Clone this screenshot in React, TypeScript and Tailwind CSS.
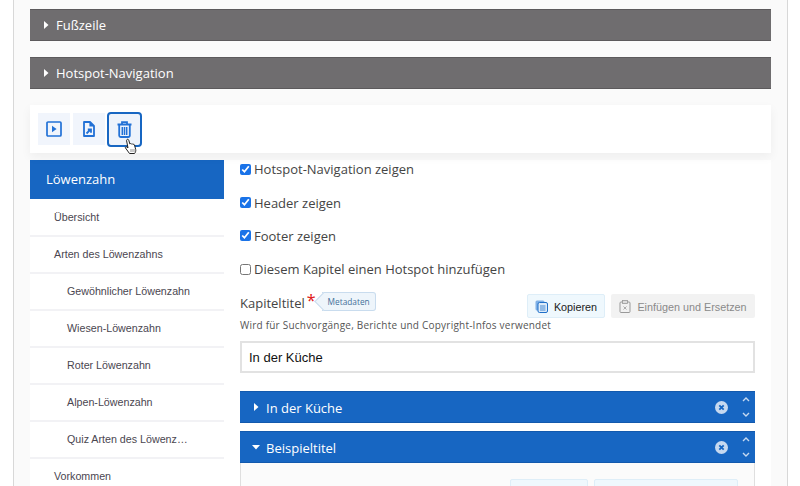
import React from "react";

const openSans = "[font-family:'Open_Sans',sans-serif]";
const arial = "[font-family:'Liberation_Sans',sans-serif]";

const navItems = [
  { label: "Übersicht", depth: 0 },
  { label: "Arten des Löwenzahns", depth: 0 },
  { label: "Gewöhnlicher Löwenzahn", depth: 1 },
  { label: "Wiesen-Löwenzahn", depth: 1 },
  { label: "Roter Löwenzahn", depth: 1 },
  { label: "Alpen-Löwenzahn", depth: 1 },
  { label: "Quiz Arten des Löwenz…", depth: 1 },
  { label: "Vorkommen", depth: 0 },
];

const checks = [
  { label: "Hotspot-Navigation zeigen", checked: true },
  { label: "Header zeigen", checked: true },
  { label: "Footer zeigen", checked: true },
  { label: "Diesem Kapitel einen Hotspot hinzufügen", checked: false },
];

const Caret = ({ open = false }: { open?: boolean }) => (
  <svg width="8" height="8" viewBox="0 0 8 8" className="shrink-0">
    {open ? (
      <path d="M0 2h8L4 6.5z" fill="#fff" />
    ) : (
      <path d="M2 0l4.5 4L2 8z" fill="#fff" />
    )}
  </svg>
);

const GrayBar = ({ title }: { title: string }) => (
  <div className="h-8 bg-[#6f6d6f] border-y border-[#5c5a5c] flex items-center pl-3">
    <Caret />
    <span className={`ml-[6px] pt-[2px] text-[13px] text-white ${openSans}`}>{title}</span>
  </div>
);

const BlueBar = ({ title, open }: { title: string; open?: boolean }) => (
  <div className="h-8 bg-[#1766c2] border-y border-[#1259ad] flex items-center pl-3 pr-[5px]">
    <span className="w-[14px]">
      <Caret open={open} />
    </span>
    <span className={`pt-[3px] text-[13px] text-white ${openSans}`}>{title}</span>
    <div className="ml-auto flex items-center gap-[14px]">
      <svg width="13" height="13" viewBox="0 0 13 13">
        <circle cx="6.5" cy="6.5" r="6.5" fill="#c6d9f0" />
        <path d="M4.3 4.3l4.4 4.4M8.7 4.3l-4.4 4.4" stroke="#1766c2" strokeWidth="1.8" />
      </svg>
      <div className="flex flex-col gap-[10px]">
        <svg width="8" height="5" viewBox="0 0 8 5">
          <path d="M1 4l3-3 3 3" fill="none" stroke="#c6d9f0" strokeWidth="1.4" />
        </svg>
        <svg width="8" height="5" viewBox="0 0 8 5">
          <path d="M1 1l3 3 3-3" fill="none" stroke="#c6d9f0" strokeWidth="1.4" />
        </svg>
      </div>
    </div>
  </div>
);

const ToolButton = ({
  children,
  active,
}: {
  children: React.ReactNode;
  active?: boolean;
}) => (
  <div
    className={`flex items-center justify-center ${
      active
        ? "size-[35px] -ml-[1px] mt-px rounded-[4px] border-2 border-[#1766c2] bg-[#eef3fb]"
        : "size-8 bg-[#f1f5fc]"
    }`}
  >
    {children}
  </div>
);

export default function App() {
  return (
    <div className="w-[800px] h-[486px] overflow-hidden bg-white">
      <div className="relative ml-[13px] w-[775px] h-[486px] border-x border-[#d8d8d8] bg-[#fafafa] pl-4 pr-4 pt-[9px]">
        <div className="flex flex-col gap-4">
          <GrayBar title="Fußzeile" />
          <GrayBar title="Hotspot-Navigation" />
        </div>

        {/* toolbar */}
        <div className="relative z-10 mt-4 h-[48px] bg-white shadow-[0_4px_10px_rgba(0,0,0,0.05)] flex items-center pl-2 gap-[3px]">
          <ToolButton>
            <svg width="16" height="16" viewBox="0 0 16 16">
              <rect x="1" y="1" width="14" height="14" rx="1" fill="none" stroke="#2271d6" strokeWidth="1.7" />
              <path d="M6 4.8l4.6 3.2L6 11.2z" fill="#2271d6" />
            </svg>
          </ToolButton>
          <ToolButton>
            <svg width="14" height="16" viewBox="0 0 14 16">
              <path d="M2 1h6l4 4v10H2z" fill="none" stroke="#2271d6" strokeWidth="1.8" strokeLinejoin="round" />
              <path d="M8 1v4h4" fill="#2271d6" stroke="#2271d6" strokeWidth="1.2" />
              <path d="M4.5 12.5L8 9M5.8 8.5H9v3.2" fill="none" stroke="#2271d6" strokeWidth="1.8" />
            </svg>
          </ToolButton>
          <ToolButton active>
            <svg width="15" height="17" viewBox="0 0 15 17">
              <path d="M0.5 3.5h14M5 3.5V1.2h5v2.3" fill="none" stroke="#2271d6" strokeWidth="1.8" />
              <path d="M2.2 4v10.5a1.5 1.5 0 0 0 1.5 1.5h7.6a1.5 1.5 0 0 0 1.5-1.5V4" fill="none" stroke="#2271d6" strokeWidth="1.8" />
              <path d="M5.3 6v8M7.5 6v8M9.7 6v8" stroke="#2271d6" strokeWidth="1.5" />
            </svg>
          </ToolButton>
          {/* pointer */}
          <svg width="16" height="18" viewBox="0 0 16 18" className="absolute left-[93px] top-[33px]">
            <path
              d="M4 1.5c.8-.6 1.6 0 1.8.8l1 3.6c.5-.5 1.3-.4 1.6.2.5-.4 1.3-.3 1.6.3.6-.3 1.3 0 1.5.6l1.2 4.5c.3 1.4-.2 3-1.2 4H6.5L2.5 10c-.5-.7.3-1.6 1.1-1.1l1.4 1L3.6 2.8c-.1-.5 0-1 .4-1.3z"
              fill="#fff"
              stroke="#222"
              strokeWidth="1"
              strokeLinejoin="round"
            />
            <path d="M8 11v3M10 11v3M12 11v3" stroke="#777" strokeWidth="0.8" />
          </svg>
        </div>

        <div className="mt-[7px] flex h-[340px] overflow-hidden">
          {/* sidebar */}
          <div className={`w-[194px] shrink-0 ${arial}`}>
            <div className={`h-[39px] bg-[#1766c2] flex items-center pl-4 pt-px text-[13px] text-white ${openSans}`}>
              Löwenzahn
            </div>
            <div className="pt-px bg-white">
              {navItems.map((item) => (
                <div
                  key={item.label}
                  className={`h-[37px] bg-white border-b-2 border-[#f2f2f5] flex items-center text-[10.7px] text-[#4a4650] ${
                    item.depth ? "pl-[37px]" : "pl-6"
                  }`}
                >
                  {item.label}
                </div>
              ))}
            </div>
          </div>

          {/* content */}
          <div className="flex-1 bg-white pl-4 pr-4">
            <div className="-mt-px flex flex-col gap-[13.4px]">
              {checks.map((c) => (
                <label
                  key={c.label}
                  className={`h-5 flex items-center gap-[3px] text-[13px] text-[#444] ${openSans}`}
                >
                  <input
                    type="checkbox"
                    defaultChecked={c.checked}
                    className="size-[11px] m-0 accent-[#1a73e8]"
                  />
                  <span className="pt-[2px]">{c.label}</span>
                </label>
              ))}
            </div>

            <div className="mt-[12px] flex items-start justify-between h-[27px]">
              <div className="flex items-center pt-[3px]">
                <span className={`text-[13px] text-[#444] ${openSans}`}>Kapiteltitel</span>
                <span className="ml-[2px] -mt-2 text-[16px] leading-none text-[#e02020]">*</span>
                <span className="relative ml-[6px] -mt-1 h-[19px] pl-[6px] pr-[5px] flex items-center rounded-r-[3px] border-y border-r border-[#c9dcee] bg-[#eef5fb] text-[8.3px] text-[#44709a]">
                  <span className="absolute -left-[5px] top-[2px] size-[13px] rotate-45 border-l border-b border-[#c9dcee] bg-[#eef5fb]" />
                  <span className={`relative ${openSans}`}>Metadaten</span>
                </span>
              </div>
              <div className={`flex items-center gap-[6px] mt-[3px] text-[10.8px] ${arial}`}>
                <div className="h-6 w-[78px] rounded-[2px] border border-[#deeef8] bg-[#eff8fd] flex items-center justify-center gap-[6px] text-[#222]">
                  <svg width="13" height="13" viewBox="0 0 13 13">
                    <rect x="0.5" y="0.5" width="9" height="10" rx="1.5" fill="#7fb0e6" />
                    <rect x="3" y="2.5" width="9.5" height="10" rx="1.5" fill="#dcebf9" stroke="#1f6fc8" />
                    <path d="M5 6h5.5M5 8h5.5M5 10h5.5" stroke="#1f6fc8" strokeWidth="0.8" />
                  </svg>
                  <span className="pt-px">Kopieren</span>
                </div>
                <div className="h-6 w-[144px] rounded-[2px] bg-[#f2f2f2] flex items-center justify-center gap-[6px] text-[#8a8a8a]">
                  <svg width="12" height="13" viewBox="0 0 12 13">
                    <rect x="1" y="2" width="10" height="10.5" rx="1" fill="none" stroke="#999" />
                    <rect x="3.5" y="0.5" width="5" height="3" fill="#ddd" stroke="#999" strokeWidth="0.8" />
                    <path d="M4.5 6.5l3 3M7.5 6.5l-3 3" stroke="#999" strokeWidth="0.8" />
                  </svg>
                  <span className="pt-px">Einfügen und Ersetzen</span>
                </div>
              </div>
            </div>

            <div className={`text-[10px] tracking-[0.22px] text-[#555] ${openSans}`}>
              Wird für Suchvorgänge, Berichte und Copyright-Infos verwendet
            </div>

            <div className={`mt-[8px] h-8 border-2 border-[#e2e2e2] bg-white flex items-center pl-[7px] pt-[2px] text-[13px] text-[#111] ${arial}`}>
              In der Küche
            </div>

            <div className="mt-[18px] flex flex-col gap-2">
              <BlueBar title="In der Küche" />
              <BlueBar title="Beispieltitel" open />
            </div>

            <div className="h-[40px] border-x border-[#dfdfdf] bg-[#fbfbfb] flex justify-end pr-4 gap-[6px] pt-4">
              <div className="w-[78px] h-6 rounded-[2px] border border-[#deeef8] bg-[#eff8fd]" />
              <div className="w-[144px] h-6 rounded-[2px] border border-[#deeef8] bg-[#eff8fd]" />
            </div>
          </div>
        </div>
      </div>
    </div>
  );
}
